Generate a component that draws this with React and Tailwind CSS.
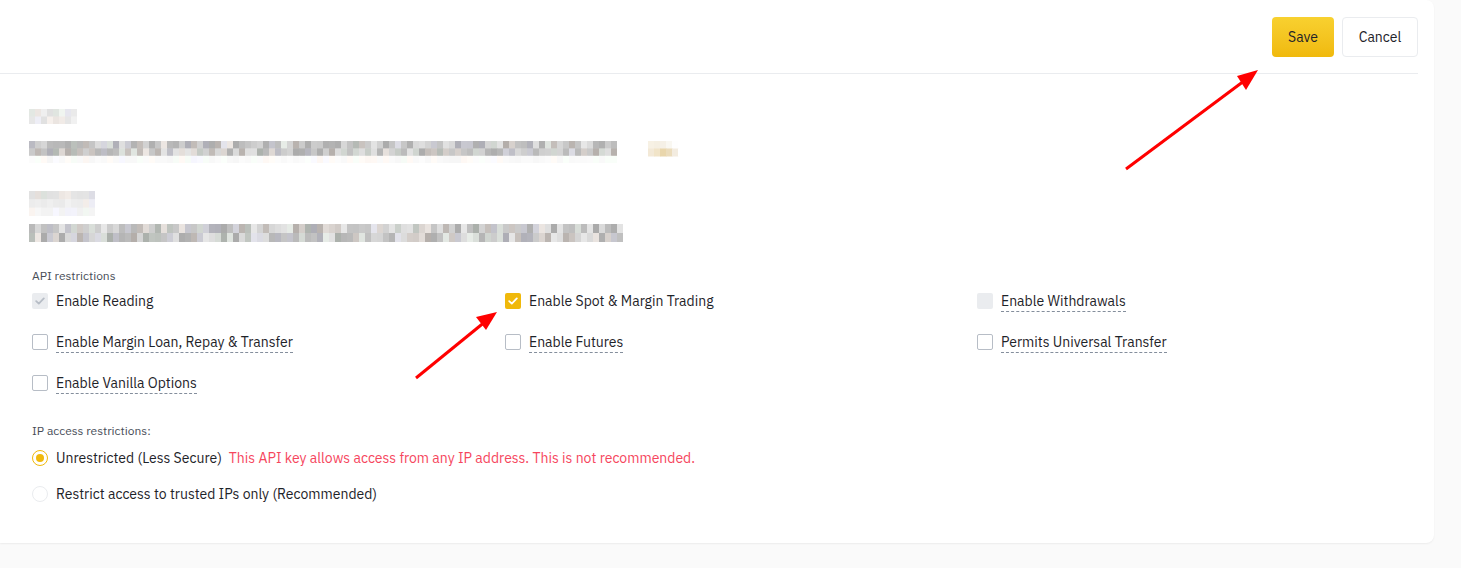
import React from "react";

function rng(seed) {
  let s = seed >>> 0;
  return () => {
    s = (s * 1664525 + 1013904223) >>> 0;
    return s / 4294967296;
  };
}

function Mosaic({ cols, rows, cw = 6, rh, seed, lo, hi, fade = [] }) {
  const r = rng(seed);
  const rects = [];
  for (let y = 0; y < rows; y++) {
    for (let x = 0; x < cols; x++) {
      const f = fade[y] ?? 0;
      let v = lo + (hi - lo) * r();
      v = v + (255 - v) * f;
      const t = r();
      let rr = v, gg = v, bb = v;
      if (t < 0.15) { rr += 6; bb -= 4; }
      else if (t < 0.3) { gg += 5; }
      else if (t < 0.45) { bb += 8; }
      const c = `rgb(${Math.min(255, rr | 0)},${Math.min(255, gg | 0)},${Math.min(255, bb | 0)})`;
      rects.push(<rect key={`${x}-${y}`} x={x * cw} y={y * rh} width={cw + 0.5} height={rh + 0.5} fill={c} />);
    }
  }
  return (
    <svg width={cols * cw} height={rows * rh} className="block shrink-0">
      {rects}
    </svg>
  );
}

function Tint() {
  const cells = [
    ["#f7f1e4", "#f5efe2", "#f5f0e6", "#f9f7f1", "#fefefe", "#ffffff"],
    ["#f3e9d7", "#f1e4c8", "#e9d6ac", "#ebdcbc", "#f3ece0", "#ffffff"],
  ];
  return (
    <svg width="36" height="22" className="block shrink-0">
      {cells.map((row, y) =>
        row.map((c, x) => <rect key={`${x}${y}`} x={x * 6} y={y * 7.5} width="6.5" height="8" fill={c} />)
      )}
    </svg>
  );
}

function Check({ color }) {
  return (
    <svg width="10" height="8" viewBox="0 0 10 8" fill="none">
      <path d="M1.2 4.2 L3.8 6.6 L8.8 1.4" stroke={color} strokeWidth="1.8" strokeLinecap="round" strokeLinejoin="round" />
    </svg>
  );
}

function Box({ state }) {
  if (state === "checked")
    return (
      <span className="w-4 h-4 rounded-[2px] bg-[#f0b90b] flex items-center justify-center shrink-0">
        <Check color="#ffffff" />
      </span>
    );
  if (state === "disabledChecked")
    return (
      <span className="w-4 h-4 rounded-[2px] bg-[#eaecef] flex items-center justify-center shrink-0">
        <Check color="#b7bdc6" />
      </span>
    );
  if (state === "disabled")
    return <span className="w-4 h-4 rounded-[2px] bg-[#eaecef] shrink-0" />;
  return <span className="w-4 h-4 rounded-[2px] border border-[#b7bdc6] bg-white shrink-0" />;
}

function Item({ state, label, dashed }) {
  return (
    <div className="flex items-center gap-2 h-[34px]">
      <Box state={state} />
      <span className={`text-[14px] leading-[20px] text-[#1e2329] ${dashed ? "border-b border-dashed border-[#848e9c] leading-[18px]" : ""}`}>
        {label}
      </span>
    </div>
  );
}

export default function App() {
  return (
    <div className="relative w-[1461px] h-[568px] bg-[#fafafa] overflow-hidden" style={{ fontFamily: '"IBM Plex Sans", Inter, "Noto Sans", sans-serif' }}>
      <div className="w-[1434px] bg-white rounded-r-lg shadow-[0_1px_2px_rgba(0,0,0,0.06)] pb-[32px]">
        <div className="h-[74px] mr-4 border-b border-[#eaecef] flex items-start justify-end gap-2 pt-[17px]">
          <button className="h-10 w-[62px] rounded bg-gradient-to-b from-[#f8d12f] to-[#f0b90b] text-[14px] font-normal text-[#1e2329]">
            Save
          </button>
          <button className="h-10 w-[76px] rounded border border-[#eaecef] bg-white text-[14px] font-normal text-[#1e2329]">
            Cancel
          </button>
        </div>

        <div className="pl-[29px] pt-[35px]">
          <Mosaic cols={8} rows={2} rh={7.5} seed={11} lo={222} hi={246} />
          <div className="mt-[17px] flex items-start gap-[31px]">
            <Mosaic cols={98} rows={3} rh={7.4} seed={23} lo={172} hi={232} fade={[0, 0, 0.9]} />
            <Tint />
          </div>
          <div className="mt-[28px]">
            <Mosaic cols={11} rows={3} rh={8.3} seed={37} lo={220} hi={240} fade={[0, 0.4, 0.6]} />
          </div>
          <div className="mt-[8px]">
            <Mosaic cols={99} rows={2} rh={9} seed={51} lo={170} hi={232} />
          </div>
        </div>

        <div className="pl-8 mt-[26px]">
          <div className="text-[12px] leading-4 text-[#474d57]">API restrictions</div>
          <div className="grid grid-cols-[473px_472px_1fr] gap-y-[7px]">
            <Item state="disabledChecked" label="Enable Reading" />
            <Item state="checked" label="Enable Spot & Margin Trading" />
            <Item state="disabled" label="Enable Withdrawals" dashed />
            <Item state="empty" label="Enable Margin Loan, Repay & Transfer" dashed />
            <Item state="empty" label="Enable Futures" dashed />
            <Item state="empty" label="Permits Universal Transfer" dashed />
            <Item state="empty" label="Enable Vanilla Options" dashed />
          </div>

          <div className="mt-[23px] text-[12px] leading-4 text-[#474d57]">IP access restrictions:</div>
          <div className="mt-[2px] flex items-center h-[34px]">
            <span className="w-4 h-4 rounded-full border border-[#f0b90b] flex items-center justify-center shrink-0">
              <span className="w-2 h-2 rounded-full bg-[#f0b90b]" />
            </span>
            <span className="ml-2 text-[14px] text-[#1e2329]">Unrestricted (Less Secure)</span>
            <span className="ml-[7px] text-[14px] text-[#f6465d]">This API key allows access from any IP address. This is not recommended.</span>
          </div>
          <div className="mt-[2px] flex items-center gap-2 h-[34px]">
            <span className="w-4 h-4 rounded-full border border-[#eaecef] bg-white shrink-0" />
            <span className="text-[14px] text-[#1e2329]">Restrict access to trusted IPs only (Recommended)</span>
          </div>
        </div>
      </div>

      <svg className="absolute inset-0 pointer-events-none" width="1461" height="568">
        <line x1="1126" y1="169" x2="1244" y2="81" stroke="#ff0000" strokeWidth="3" />
        <polygon points="1258,70 1237,76 1246,90" fill="#ff0000" />
        <line x1="416" y1="378" x2="486" y2="321" stroke="#ff0000" strokeWidth="3" />
        <polygon points="497,312 476,317 486,330" fill="#ff0000" />
      </svg>
    </div>
  );
}
